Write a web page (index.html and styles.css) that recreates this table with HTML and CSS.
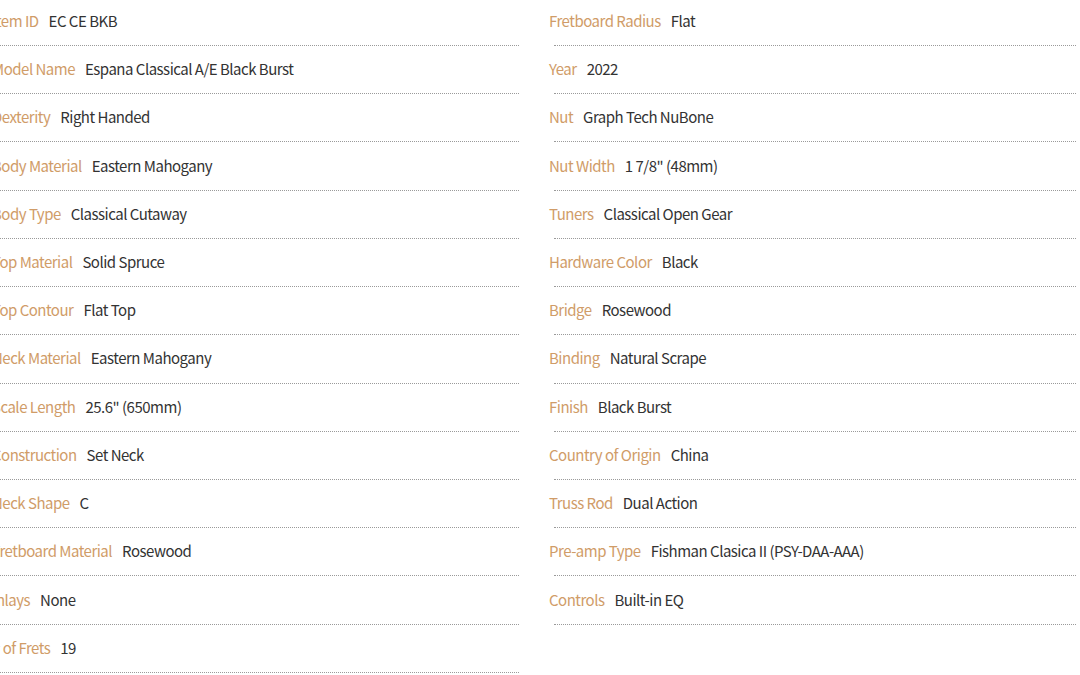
FILE: index.html
```html
<!DOCTYPE html>
<html lang="en">
<head>
<meta charset="utf-8">
<title>Specifications</title>
<link rel="stylesheet" href="styles.css">
</head>
<body>
<div class="specs">
  <div class="col">
    <div class="spec"><div class="txt"><span class="lbl">Item ID</span><span class="val">EC CE BKB</span></div></div>
    <div class="spec"><div class="txt"><span class="lbl">Model Name</span><span class="val">Espana Classical A/E Black Burst</span></div></div>
    <div class="spec"><div class="txt"><span class="lbl">Dexterity</span><span class="val">Right Handed</span></div></div>
    <div class="spec"><div class="txt"><span class="lbl">Body Material</span><span class="val">Eastern Mahogany</span></div></div>
    <div class="spec"><div class="txt"><span class="lbl">Body Type</span><span class="val">Classical Cutaway</span></div></div>
    <div class="spec"><div class="txt"><span class="lbl">Top Material</span><span class="val">Solid Spruce</span></div></div>
    <div class="spec"><div class="txt"><span class="lbl">Top Contour</span><span class="val">Flat Top</span></div></div>
    <div class="spec"><div class="txt"><span class="lbl">Neck Material</span><span class="val">Eastern Mahogany</span></div></div>
    <div class="spec"><div class="txt"><span class="lbl">Scale Length</span><span class="val">25.6" (650mm)</span></div></div>
    <div class="spec"><div class="txt"><span class="lbl">Construction</span><span class="val">Set Neck</span></div></div>
    <div class="spec"><div class="txt"><span class="lbl">Neck Shape</span><span class="val">C</span></div></div>
    <div class="spec"><div class="txt"><span class="lbl">Fretboard Material</span><span class="val">Rosewood</span></div></div>
    <div class="spec"><div class="txt"><span class="lbl">Inlays</span><span class="val">None</span></div></div>
    <div class="spec"><div class="txt"><span class="lbl"># of Frets</span><span class="val">19</span></div></div>
  </div>
  <div class="col">
    <div class="spec"><div class="txt"><span class="lbl">Fretboard Radius</span><span class="val">Flat</span></div></div>
    <div class="spec"><div class="txt"><span class="lbl">Year</span><span class="val">2022</span></div></div>
    <div class="spec"><div class="txt"><span class="lbl">Nut</span><span class="val">Graph Tech NuBone</span></div></div>
    <div class="spec"><div class="txt"><span class="lbl">Nut Width</span><span class="val">1 7/8" (48mm)</span></div></div>
    <div class="spec"><div class="txt"><span class="lbl">Tuners</span><span class="val">Classical Open Gear</span></div></div>
    <div class="spec"><div class="txt"><span class="lbl">Hardware Color</span><span class="val">Black</span></div></div>
    <div class="spec"><div class="txt"><span class="lbl">Bridge</span><span class="val">Rosewood</span></div></div>
    <div class="spec"><div class="txt"><span class="lbl">Binding</span><span class="val">Natural Scrape</span></div></div>
    <div class="spec"><div class="txt"><span class="lbl">Finish</span><span class="val">Black Burst</span></div></div>
    <div class="spec"><div class="txt"><span class="lbl">Country of Origin</span><span class="val">China</span></div></div>
    <div class="spec"><div class="txt"><span class="lbl">Truss Rod</span><span class="val">Dual Action</span></div></div>
    <div class="spec"><div class="txt"><span class="lbl">Pre-amp Type</span><span class="val">Fishman Clasica II (PSY-DAA-AAA)</span></div></div>
    <div class="spec"><div class="txt"><span class="lbl">Controls</span><span class="val">Built-in EQ</span></div></div>
  </div>
</div>
</body>
</html>
```

FILE: styles.css
```css
html, body {
  margin: 0;
  padding: 0;
  background: #ffffff;
  overflow: hidden;
}

body {
  font-family: "Noto Sans CJK KR", "Noto Sans", sans-serif;
  font-size: 15px;
  color: #333333;
  letter-spacing: -0.5px;
}

.specs {
  display: grid;
  grid-template-columns: 527px 527px;
  column-gap: 30px;
  margin: -2.2px 0 0 -8px;
}

.col {
  display: flex;
  flex-direction: column;
}

.spec {
  height: 48.23px;
  display: flex;
  flex-direction: column;
}

.spec::after {
  content: "";
  display: block;
  margin-left: 5px;
  border-bottom: 1px dotted #9a9a9a;
}

.txt {
  flex: 1;
  display: flex;
  align-items: center;
  gap: 10px;
  padding-bottom: 2px;
  white-space: nowrap;
}

.lbl {
  color: #d09c68;
}

.val {
  color: #333333;
}
```
